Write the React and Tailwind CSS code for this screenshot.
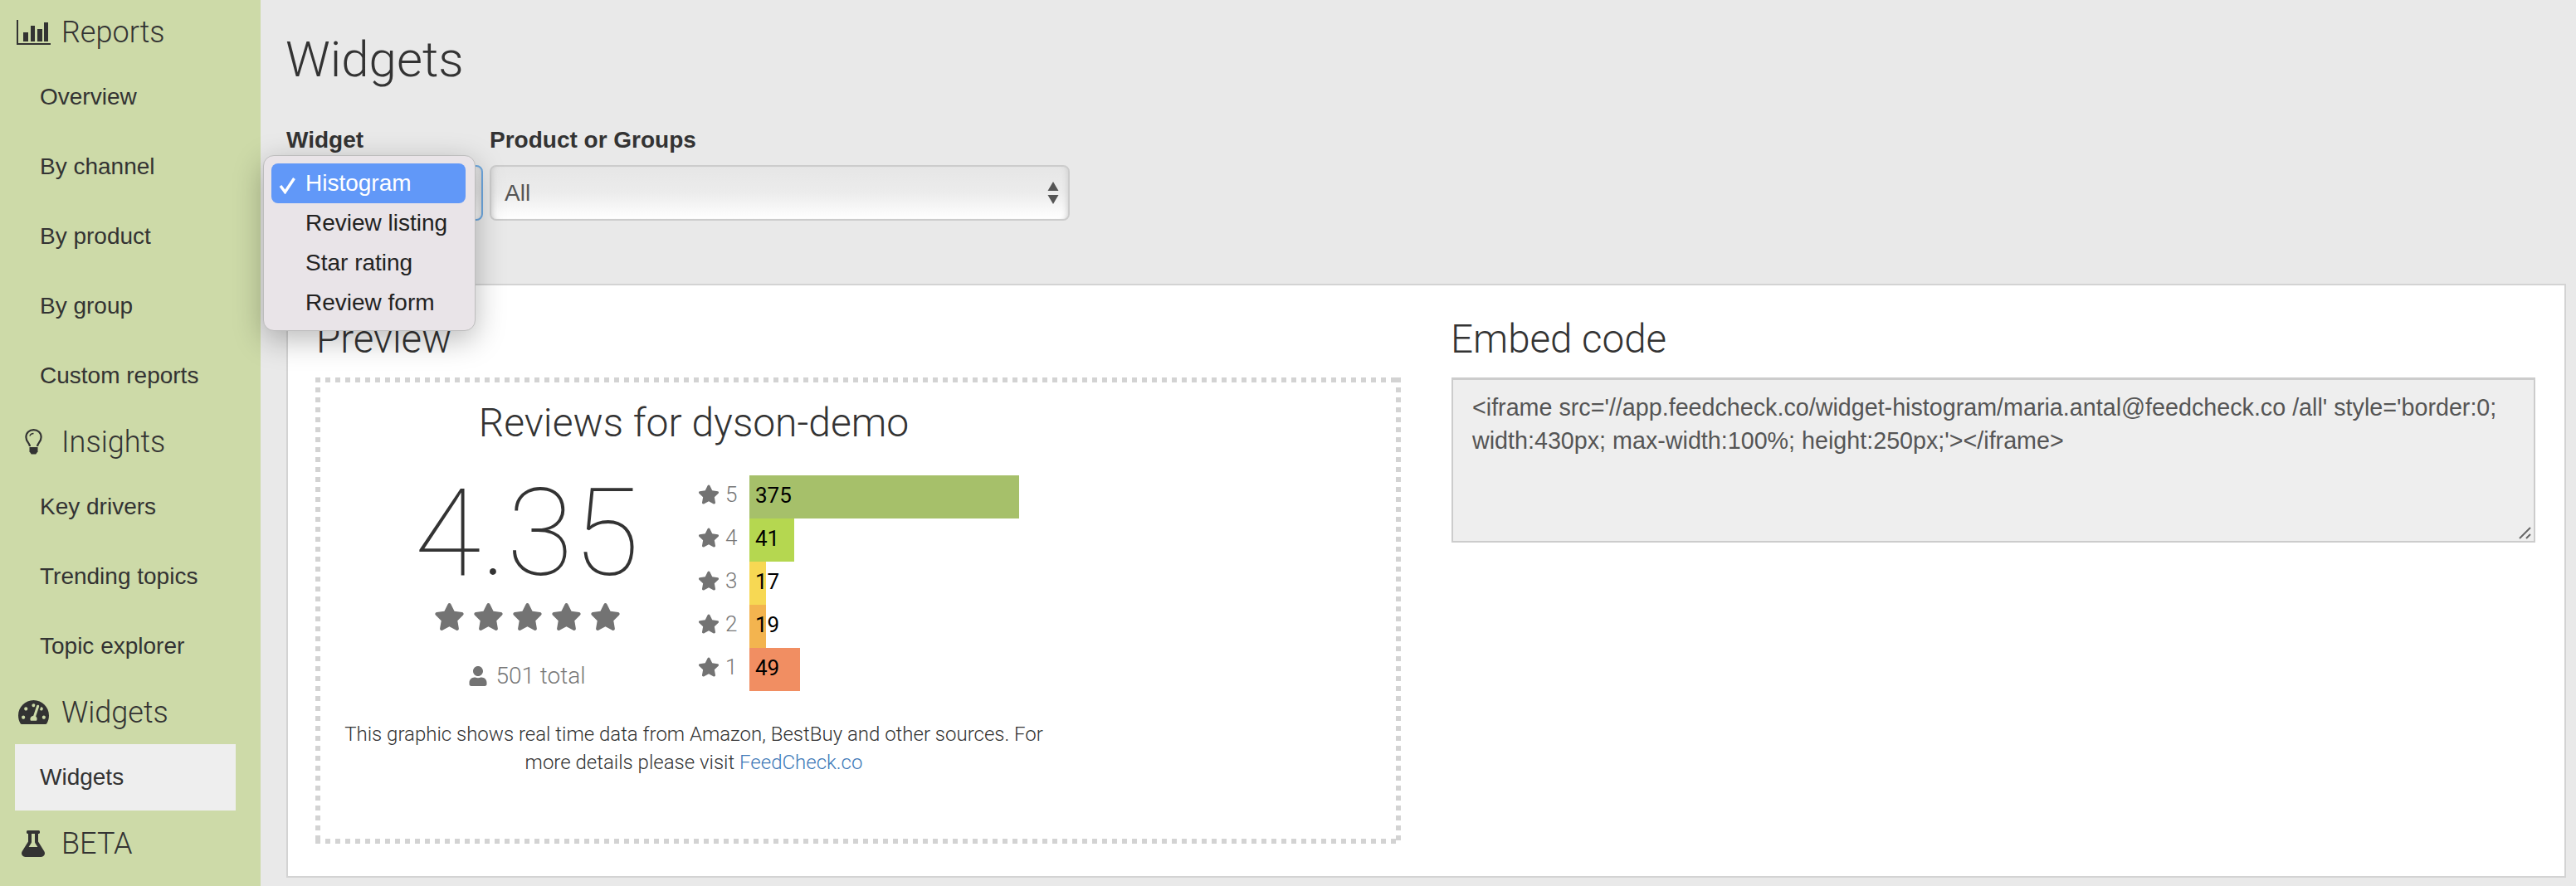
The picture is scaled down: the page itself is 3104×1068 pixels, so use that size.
import { FaStar, FaUser, FaTachometerAlt, FaFlask } from "react-icons/fa"

const sans = "font-['Liberation_Sans',Arial,sans-serif]"
const roboto = "font-['Roboto',sans-serif]"

function ChartIcon() {
  return (
    <svg width="41" height="30" viewBox="0 0 41 30" fill="#333">
      <path d="M0 0h2v28h39v2H0z" />
      <path d="M8 15h6v11H8zM17 7h5v19h-5zM25 11h6v15h-6zM33 3h5v23h-5z" />
    </svg>
  )
}

function BulbIcon() {
  return (
    <svg width="21" height="31" viewBox="0 0 22 34" fill="none">
      <path d="M6 23c0-4-5-6-5-12C1 5 5.500 1.200 11 1.200S21 5 21 11c0 6-5 8-5 12" stroke="#333" strokeWidth="2.400" />
      <path d="M11 6c-2.500 0-4.500 1.500-5 3.500" stroke="#333" strokeWidth="1.500" />
      <path d="M5.500 24h11v6l-2.500 3.500H8L5.500 30z" fill="#333" />
    </svg>
  )
}

function SideHeading({ icon, label }) {
  return (
    <div className="h-[74px] pb-[3px] flex items-center">
      <div className="w-[74px] flex justify-center pl-[6px]">{icon}</div>
      <span className="text-[36px] font-light text-[#333] font-['Roboto',sans-serif]">{label}</span>
    </div>
  )
}

function SideItem({ label, active }) {
  return (
    <div className={`h-[80px] mb-[4px] ml-[18px] w-[266px] pl-[30px] flex items-center text-[28px] text-[#333] ${active ? "bg-[#eeeeee]" : ""}`}>
      {label}
    </div>
  )
}

function Sidebar() {
  return (
    <div className={`w-[314px] h-full shrink-0 bg-[#cddaa8] pt-[3px] ${sans}`}>
      <SideHeading icon={<ChartIcon />} label="Reports" />
      <SideItem label="Overview" />
      <SideItem label="By channel" />
      <SideItem label="By product" />
      <SideItem label="By group" />
      <SideItem label="Custom reports" />
      <SideHeading icon={<BulbIcon />} label="Insights" />
      <SideItem label="Key drivers" />
      <SideItem label="Trending topics" />
      <SideItem label="Topic explorer" />
      <SideHeading icon={<FaTachometerAlt size={37} color="#333" />} label="Widgets" />
      <SideItem label="Widgets" active />
      <SideHeading icon={<FaFlask size={32} color="#333" />} label="BETA" />
    </div>
  )
}

function SelectBox({ className = "", children }) {
  return (
    <div className={`h-[67px] rounded-[8px] border-[2px] bg-gradient-to-b from-[#e6e6e6] via-[#ececec] via-50% to-[#ffffff] shadow-[inset_6px_0_6px_-5px_#cfcfcf,inset_-6px_0_6px_-5px_#cfcfcf] flex items-center justify-between ${className}`}>
      {children}
    </div>
  )
}

function Dropdown() {
  const options = ["Histogram", "Review listing", "Star rating", "Review form"]
  return (
    <div className={`absolute left-[3px] top-[187px] w-[256px] h-[212px] bg-[#e9e4e8] border border-[#bdbdbd] rounded-[13px] shadow-[0_10px_36px_rgba(0,0,0,0.28)] p-[9px] text-[28px] text-[#222] z-10 ${sans}`}>
      {options.map((o, i) => (
        <div key={o} className={`h-[48px] w-[234px] rounded-[8px] pl-[41px] flex items-center relative ${i === 0 ? "bg-[#6198f8] text-white" : ""}`}>
          {i === 0 && (
            <svg className="absolute left-[9px] top-[16px]" width="21" height="21" viewBox="0 0 21 21" fill="none">
              <path d="M2 11l5.500 7.500L18.500 2" stroke="#fff" strokeWidth="3.400" />
            </svg>
          )}
          {o}
        </div>
      ))}
    </div>
  )
}

const bars = [
  { star: 5, count: 375, width: 325, color: "bg-[#a6c06a]" },
  { star: 4, count: 41, width: 54, color: "bg-[#b5d750]" },
  { star: 3, count: 17, width: 20, color: "bg-[#f7d853]" },
  { star: 2, count: 19, width: 20, color: "bg-[#f3b44f]" },
  { star: 1, count: 49, width: 61, color: "bg-[#f18e62]" },
]

function Histogram() {
  return (
    <div className="flex flex-col">
      {bars.map((b) => (
        <div key={b.star} className="h-[52px] flex items-center">
          <FaStar size={26} color="#737373" className="mb-[6px]" />
          <span className="w-[36px] pl-[7px] text-[26px] font-light text-[#777] mb-[6px]">{b.star}</span>
          <div className="relative h-[52px] w-[325px]">
            <div className={`h-full ${b.color}`} style={{ width: b.width }} />
            <span className="absolute left-[7px] top-[7px] text-[26px] leading-[34px] text-black">{b.count}</span>
          </div>
        </div>
      ))}
    </div>
  )
}

function PreviewBox() {
  return (
    <div className={`w-[1308px] h-[562px] pt-[19px] pl-[26px] ${roboto} [background-image:linear-gradient(to_right,#d3d3d3_50%,transparent_50%),linear-gradient(to_right,#d3d3d3_50%,transparent_50%),linear-gradient(to_bottom,#d3d3d3_50%,transparent_50%),linear-gradient(to_bottom,#d3d3d3_50%,transparent_50%)] [background-size:12px_6px,12px_6px,6px_12px,6px_12px] [background-position:0_0,0_100%,0_0,100%_0] [background-repeat:repeat-x,repeat-x,repeat-y,repeat-y]`}>
      <div className="w-[860px]">
        <div className="h-[72px] flex items-center justify-center text-[48px] font-light text-[#333]">Reviews for dyson-demo</div>
        <div className="flex mt-[27px] pl-[23px]">
          <div className="w-[412px] flex flex-col items-center">
            <div className="h-[136px] pt-[5px] flex items-center text-[146px] leading-none font-[150] text-[#333]">4.35</div>
            <div className="flex gap-[10px] mt-[16px]">
              <FaStar size={37} color="#737373" />
              <FaStar size={37} color="#737373" />
              <FaStar size={37} color="#737373" />
              <FaStar size={37} color="#737373" />
              <FaStar size={37} color="#737373" />
            </div>
            <div className="flex items-center gap-[9px] mt-[32px] text-[28px] font-light text-[#777]">
              <FaUser size={24} color="#737373" />
              <span>501 total</span>
            </div>
          </div>
          <Histogram />
        </div>
        <div className="mt-[32px] text-center text-[24px] leading-[34px] font-light text-[#333]">
          <div>This graphic shows real time data from Amazon, BestBuy and other sources. For</div>
          <div>more details please visit <a className="text-[#3f7ab8]">FeedCheck.co</a></div>
        </div>
      </div>
    </div>
  )
}

function EmbedCode() {
  return (
    <div className="relative w-[1306px] h-[199px] bg-[#eeeeee] border-[2px] border-[#cccccc] border-t-[3px] px-[23px] pt-[13px] text-[28.7px] leading-[40px] text-[#555] font-['Liberation_Sans',Arial,sans-serif]">
      {"<iframe src='//app.feedcheck.co/widget-histogram/maria.antal@feedcheck.co /all' style='border:0; width:430px; max-width:100%; height:250px;'></iframe>"}
      <svg className="absolute right-[2px] bottom-[2px]" width="16" height="16" viewBox="0 0 16 16" stroke="#666" strokeWidth="2">
        <path d="M1 15L14 2M9 15l5-5" />
      </svg>
    </div>
  )
}

export default function App() {
  return (
    <div className={`w-[3104px] h-[1068px] flex overflow-hidden bg-[#e9e9e9] ${sans}`}>
      <Sidebar />
      <div className="relative flex-1 pl-[31px] pr-[12px]">
        <div className="h-[144px] flex items-center -ml-[1px] text-[60px] font-light text-[#333] font-['Roboto',sans-serif]">Widgets</div>
        <div className="flex gap-[8px] mt-[7px]">
          <div className="w-[237px]">
            <div className="h-[36px] leading-[36px] text-[28px] font-bold text-[#333] mb-[12px]">Widget</div>
            <SelectBox className="border-[#6ea8e0]" />
          </div>
          <div className="w-[699px]">
            <div className="h-[36px] leading-[36px] text-[28px] font-bold text-[#333] mb-[12px]">Product or Groups</div>
            <SelectBox className="border-[#cccccc] pl-[16px] pr-[11px] text-[28px] text-[#555]">
              <span>All</span>
              <svg width="14" height="27" viewBox="0 0 14 27" fill="#555">
                <path d="M7 0l6.500 11H.500zM.500 16h13L7 27z" />
              </svg>
            </SelectBox>
          </div>
        </div>
        <Dropdown />
        <div className="mt-[76px] h-[716px] bg-white border-[2px] border-[#d3d3d3] flex pl-[33px] pt-[33px] gap-[61px]">
          <div>
            <div className="h-[65px] flex items-center pl-[1px] mb-[13px] text-[47.5px] font-light text-[#333] font-['Roboto',sans-serif]">Preview</div>
            <PreviewBox />
          </div>
          <div>
            <div className="h-[65px] flex items-center -ml-[1px] mb-[13px] text-[47.5px] font-light text-[#333] font-['Roboto',sans-serif]">Embed code</div>
            <EmbedCode />
          </div>
        </div>
      </div>
    </div>
  )
}
